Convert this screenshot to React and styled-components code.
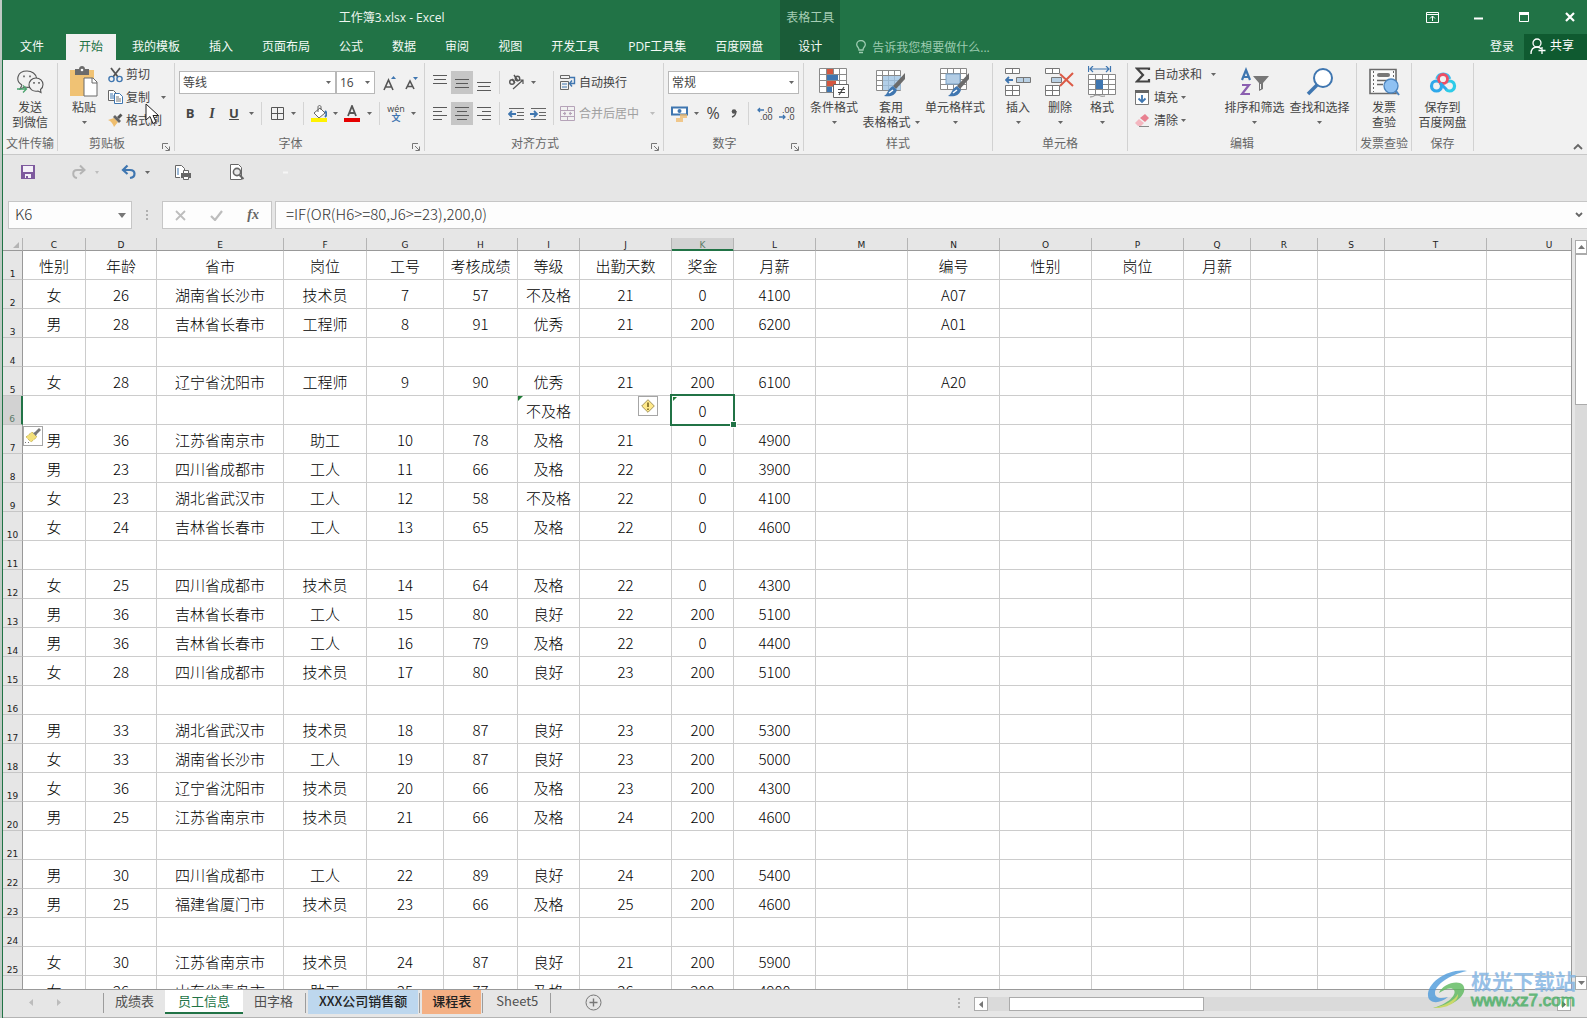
import React from "react";
import styled, { createGlobalStyle, css } from "styled-components";

const color = {
  green: "#217346",
  greenDark: "#1a5c38",
  ribbon: "#f1f1f1",
  chrome: "#e6e6e6",
  line: "#c8c8c8",
  text: "#444444",
  blue: "#3f76b0",
  grid: "#cccccc",
};

const Global = createGlobalStyle`
  *, *::before, *::after { box-sizing: border-box; }
  body { margin: 0; background: #bfcac4; }
  body, button, input, select {
    font-family: "Open Sans", "Noto Sans CJK SC", sans-serif;
    font-size: 12px;
    line-height: 15px;
    color: ${color.text};
  }
  button { border: 0; padding: 0; background: none; }
  svg { display: block; flex: none; }
`;

const Window = styled.div`
  display: flex;
  flex-direction: column;
  height: 100vh;
  overflow: hidden;
  background: ${color.chrome};
  margin-left: 2px;
  border-left: 1px solid ${color.green};
  position: relative;
`;

/* ---------- header ---------- */
const Header = styled.header`
  display: flex;
  height: 60px;
  flex: none;
  background: ${color.green};
`;
const HeaderPart = styled.div`
  display: flex;
  flex-direction: column;
  flex: ${(p) => (p.$grow ? "1" : "none")};
  background: ${(p) => (p.$dark ? color.greenDark : "transparent")};
`;
const TitleRow = styled.div`
  display: flex;
  height: 34px;
  align-items: center;
  justify-content: ${(p) => p.$align || "center"};
  color: ${(p) => p.$color || "#eef6f0"};
  gap: 16px;
  padding-right: ${(p) => p.$right || 0}px;
`;
const TabRow = styled.nav`
  display: flex;
  height: 26px;
  gap: 3px;
  padding-left: ${(p) => p.$left || 0}px;
`;
const Tab = styled.button`
  height: 26px;
  padding: 0 ${(p) => p.$pad || 13}px 2px;
  margin-right: ${(p) => p.$after || 0}px;
  color: ${(p) => (p.$active ? color.green : "#f4faf6")};
  background: ${(p) => (p.$active ? color.ribbon : "transparent")};
`;
const TellMe = styled.button`
  display: flex;
  align-items: center;
  gap: 6px;
  padding: 0;
  margin-right: auto;
  color: #9ccbb0;
`;
const Share = styled.button`
  display: flex;
  align-items: center;
  gap: 4px;
  width: 63px;
  padding: 0 0 3px 6px;
  background: #0f5a30;
  color: #ffffff;
`;
const WindowButton = styled.button`
  display: flex;
  width: 30px;
  height: 24px;
  align-items: center;
  justify-content: center;
`;

/* ---------- ribbon ---------- */
const Ribbon = styled.section`
  display: flex;
  height: 95px;
  flex: none;
  padding-top: 3px;
  background: ${color.ribbon};
  border-bottom: 1px solid ${color.line};
`;
const Group = styled.section`
  display: flex;
  flex-direction: column;
  flex: none;
  width: ${(p) => p.$w}px;
  height: 88px;
  border-right: 1px solid #d2d2d2;
`;
const GroupBody = styled.div`
  display: flex;
  height: 73px;
  padding-left: ${(p) => p.$left || 0}px;
`;
const GroupFoot = styled.footer`
  display: flex;
  height: 15px;
  color: #666666;
  text-align: center;
  white-space: nowrap;
`;
const FootLabel = styled.span`
  flex: 1;
`;
const Launcher = styled.button`
  display: flex;
  width: 18px;
  padding-left: 6px;
  align-self: flex-end;
`;
const Big = styled.button`
  display: flex;
  flex-direction: column;
  align-items: center;
  width: ${(p) => p.$w}px;
  padding-top: 3px;
  white-space: nowrap;
`;
const BigIcon = styled.span`
  display: flex;
  align-items: center;
  height: 32px;
  margin-bottom: 2px;
`;
const BigLine = styled.span`
  display: flex;
  align-items: center;
  justify-content: center;
  gap: 4px;
  height: 15px;
`;
const Stack = styled.div`
  display: flex;
  flex-direction: column;
  width: ${(p) => (p.$w ? p.$w + "px" : "auto")};
`;
const Small = styled.button`
  display: flex;
  align-items: center;
  gap: 3px;
  height: 23px;
  color: ${(p) => (p.$off ? "#a0a0a0" : color.text)};
  white-space: nowrap;
`;
const SmallArrow = styled.span`
  margin-left: ${(p) => p.$gap || 0}px;
`;
const Rows = styled.div`
  display: flex;
  flex-direction: column;
  gap: 8px;
  padding-top: 8px;
  padding-left: ${(p) => p.$left || 0}px;
`;
const Row = styled.div`
  display: flex;
  align-items: center;
  height: 23px;
`;
const Tool = styled.button`
  display: flex;
  align-items: center;
  justify-content: center;
  width: ${(p) => p.$w || 22}px;
  height: 23px;
  background: ${(p) => (p.$on ? "#c6c6c6" : "transparent")};
  font-size: ${(p) => p.$size || 13}px;
  font-weight: ${(p) => (p.$bold ? 700 : 400)};
  font-style: ${(p) => (p.$italic ? "italic" : "normal")};
  text-decoration: ${(p) => (p.$under ? "underline" : "none")};
  font-family: ${(p) => (p.$serif ? '"Liberation Serif", serif' : "inherit")};
`;
const Sep = styled.i`
  width: 1px;
  height: ${(p) => (p.$tall ? 54 : 23)}px;
  margin: ${(p) => (p.$tall ? "8px 4px 0" : "0 5px 0 4px")};
  background: #d4d4d4;
`;
const SelectWrap = styled.label`
  display: flex;
  align-items: center;
  position: relative;
  width: ${(p) => p.$w}px;
  margin-right: ${(p) => p.$after || 0}px;
`;
const Select = styled.select`
  appearance: none;
  width: 100%;
  height: 23px;
  padding: 0 0 1px 3px;
  border: 1px solid #b8b8b8;
  border-radius: 0;
  background: #ffffff;
`;
const SelectArrow = styled.span`
  position: absolute;
  right: 5px;
  pointer-events: none;
`;
const Collapse = styled.button`
  align-self: flex-end;
  margin: 0 4px 4px auto;
`;

/* ---------- quick access and formula bar ---------- */
const QuickBar = styled.div`
  display: flex;
  align-items: center;
  flex: none;
  height: 34px;
  margin-bottom: 12px;
  padding-left: 17px;
`;
const Quick = styled.button`
  width: 16px;
  margin-right: ${(p) => p.$after || 0}px;
`;
const FormulaBar = styled.div`
  display: flex;
  flex: none;
  height: 28px;
  padding-left: 5px;
`;
const field = css`
  border: 1px solid #c6c6c6;
  background: #fdfdfd;
`;
const NameBox = styled.div`
  ${field}
  display: flex;
  align-items: center;
  width: 124px;
  padding-right: 5px;
`;
const BareInput = styled.input`
  flex: 1;
  min-width: 0;
  border: 0;
  outline: 0;
  padding: 0 0 3px ${(p) => p.$left}px;
  background: transparent;
  font-family: "Noto Sans CJK SC", sans-serif;
  font-weight: 300;
  font-size: 15px;
  line-height: 20px;
  color: #333333;
`;
const Grip = styled.span`
  display: flex;
  align-items: center;
  justify-content: center;
  width: ${(p) => p.$w}px;
`;
const FormulaTools = styled.div`
  ${field}
  display: flex;
  align-items: center;
  justify-content: space-around;
  width: 110px;
  margin-right: 3px;
`;
const FormulaField = styled.div`
  ${field}
  display: flex;
  align-items: center;
  flex: 1;
  border-right: 0;
  padding-right: 4px;
`;

/* ---------- sheet ---------- */
const Body = styled.main`
  display: flex;
  flex: 1;
  min-height: 0;
  padding-top: 9px;
`;
const SheetArea = styled.div`
  flex: 1;
  min-width: 0;
  overflow: hidden;
  border-right: 1px solid #999999;
  border-bottom: 1px solid #999999;
`;
const Sheet = styled.table`
  width: 1609px;
  table-layout: fixed;
  border-collapse: separate;
  border-spacing: 0;
  background: #ffffff;
  font-family: "Noto Sans CJK SC", sans-serif;
`;
const ColHead = styled.th`
  height: 13px;
  padding: 2px 0 0;
  border-right: 1px solid #b4b4b4;
  border-bottom: 1px solid ${(p) => (p.$on ? color.green : "#999999")};
  box-shadow: ${(p) => (p.$on ? `inset 0 -1px ${color.green}` : "none")};
  background: ${(p) => (p.$on ? "#d2d2d2" : color.chrome)};
  color: ${(p) => (p.$on ? "#5c7a68" : "#222222")};
  font: 400 9px/10px "DejaVu Sans", sans-serif;
`;
const CornerMark = styled.svg`
  margin-left: auto;
  margin-right: 3px;
`;
const RowHead = styled.th`
  height: 29px;
  padding: 0;
  vertical-align: bottom;
  border-right: ${(p) => (p.$on ? `2px solid ${color.green}` : "1px solid #999999")};
  border-bottom: 1px solid #c6c6c6;
  background: ${(p) => (p.$on ? "#d2d2d2" : color.chrome)};
  color: ${(p) => (p.$on ? "#5c7a68" : "#222222")};
  font: 400 9px/10px "DejaVu Sans", sans-serif;
`;
const Cell = styled.td`
  position: relative;
  height: 29px;
  padding: 2px 0 0;
  border-right: 1px solid ${color.grid};
  border-bottom: 1px solid ${color.grid};
  text-align: center;
  white-space: nowrap;
  font-size: 15px;
  font-weight: 300;
  line-height: 24px;
  color: #000000;
`;
const Selection = styled.i`
  position: absolute;
  inset: -2px;
  z-index: 1;
  border: 2px solid ${color.green};
  &::after {
    content: "";
    position: absolute;
    right: -4px;
    bottom: -4px;
    width: 7px;
    height: 7px;
    background: ${color.green};
    border: 1px solid #ffffff;
  }
`;
const Flag = styled.i`
  position: absolute;
  top: ${(p) => p.$inset || 0}px;
  left: ${(p) => p.$inset || 0}px;
  border-top: ${(p) => p.$s}px solid #1e7b34;
  border-right: ${(p) => p.$s}px solid transparent;
`;
const Smart = styled.button`
  position: absolute;
  top: ${(p) => (p.$side === "left" ? 1 : 0)}px;
  ${(p) => (p.$side === "left" ? "left: 0;" : "right: 13px;")}
  display: flex;
  align-items: center;
  justify-content: center;
  width: 20px;
  height: 20px;
  border: 1px solid #a6a6a6;
  background: #ffffff;
`;
const VScroll = styled.div`
  display: flex;
  flex-direction: column;
  flex: none;
  width: 12px;
  margin-left: 3px;
  padding-top: 2px;
`;
const VTrack = styled.div`
  flex: 1;
  background: #dadada;
`;
const VThumb = styled.div`
  height: 151px;
  background: #ffffff;
  border: 1px solid #ababab;
  border-right: 0;
`;
const ScrollButton = styled.button`
  display: flex;
  flex: none;
  align-items: center;
  justify-content: center;
  width: ${(p) => p.$w || 14}px;
  height: 14px;
  border: 1px solid #ababab;
  background: #ffffff;
`;

/* ---------- sheet tabs ---------- */
const Footer = styled.footer`
  display: flex;
  flex: none;
  height: 28px;
  padding-right: 16px;
  border-bottom: 1px solid #b4b4b4;
`;
const NavArrows = styled.div`
  display: flex;
  align-items: flex-start;
  gap: 22px;
  width: 100px;
  padding: 9px 0 0 26px;
`;
const SheetTab = styled.button`
  height: 24px;
  padding: 0 ${(p) => p.$pad || 11}px 2px;
  font-family: "Noto Sans CJK SC", sans-serif;
  font-size: 13px;
  white-space: nowrap;
  background: ${(p) => p.$bg || "transparent"};
  color: ${(p) => p.$fg || "#505050"};
  font-weight: ${(p) => (p.$strong ? 500 : 400)};
  border-bottom: 2px solid ${(p) => (p.$active ? color.green : "transparent")};
`;
const TabSep = styled.i`
  width: 1px;
  height: 20px;
  margin: 3px ${(p) => (p.$first ? 0 : 2)}px 0 ${(p) => (p.$first ? 0 : 1)}px;
  background: #9c9c9c;
`;
const AddSheet = styled.button`
  margin: 0 auto 2px 32px;
`;
const HScroll = styled.div`
  display: flex;
  width: 597px;
  height: 14px;
  margin-top: 7px;
  background: #dadada;
`;
const HThumb = styled.div`
  width: 195px;
  margin-left: 21px;
  margin-right: auto;
  border: 1px solid #ababab;
  background: #ffffff;
`;

/* ---------- overlays ---------- */
const Pointer = styled.svg`
  position: absolute;
  left: 142px;
  top: 103px;
  pointer-events: none;
`;
const Watermark = styled.div`
  position: absolute;
  right: 11px;
  bottom: 8px;
  display: flex;
  align-items: center;
  gap: 2px;
  opacity: 0.8;
  pointer-events: none;
`;
const MarkName = styled.div`
  font: 700 21px/24px "Noto Sans CJK SC", sans-serif;
  color: #7fb2e2;
  white-space: nowrap;
`;
const MarkUrl = styled.div`
  font: 400 17px/18px "Liberation Sans", sans-serif;
  color: #46ad62;
  -webkit-text-stroke: 1px #46ad62;
`;

/* ---------- icons ---------- */
const Icon = ({ w = 16, h = w, children, ...rest }) => (
  <svg width={w} height={h} viewBox={`0 0 ${w} ${h}`} fill="none" aria-hidden="true" {...rest}>
    {children}
  </svg>
);
const Arrow = ({ fill = "#666666", s = 5 }) => (
  <Icon w={s} h={3}><path d={`M0 0h${s}L${s / 2} 3z`} fill={fill} /></Icon>
);
const ArrowTool = ({ w = 12, label, fill }) => (
  <Tool $w={w} aria-label={label}><Arrow fill={fill} /></Tool>
);
const Lines = ({ rows, top = 0 }) => (
  <Icon w={14} h={16}>
    {rows.map(([x, w], i) => (
      <path key={i} d={`M${x} ${top + i * 4 + 0.5}h${w}`} stroke="#5a5a5a" />
    ))}
  </Icon>
);
const WeChat = () => (
  <Icon w={28} h={26}>
    <path d="M6 16l-2 4 5-2c2 .5 4 .5 5 0M6 16C-1 12 1 2 11 2c5 0 9 3 9.500 7" stroke="#555" strokeWidth="1.1" />
    <path d="M13 16c0-4 3-7 7-7s7 3 7 6.500c0 2-1 4-2.500 5l.5 3-3-1.500c-5 1-9-2-9-6z" stroke="#555" strokeWidth="1.1" />
    <path d="M8 6.500v1.800M14 6.500v1.800M18 13v1.800M23 13v1.800" stroke="#555" strokeWidth="1.500" />
    <path d="M1 20h9M7 16.500l3.500 3.500L7 23.500" stroke="#4aa36d" strokeWidth="1.300" />
  </Icon>
);
const Paste = () => (
  <Icon w={30} h={32}>
    <path d="M1 4h24v26H1z" fill="#f0c274" />
    <path d="M6 3h4c0-4 6-4 6 0h4v6H6z" fill="#6b6b6b" /><circle cx="13" cy="4" r="1.3" fill="#fff" />
    <path d="M15 12h9l4 4v14H15z" fill="#fff" stroke="#6b6b6b" /><path d="M23 12v5h5" stroke="#6b6b6b" />
  </Icon>
);
const Scissors = () => (
  <Icon w={15} h={16}>
    <path d="M3 1l7 9M12 1L5 10" stroke="#555" strokeWidth="1.8" />
    <circle cx="3.5" cy="12" r="2.6" stroke={color.blue} strokeWidth="1.4" />
    <circle cx="11.5" cy="12" r="2.6" stroke={color.blue} strokeWidth="1.4" />
  </Icon>
);
const Copy = () => (
  <Icon w={15} h={15}>
    <path d="M.5.5h5l3 3v7h-8z" fill="#fff" stroke="#666" /><path d="M2 4h3M2 6h4M2 8h4" stroke={color.blue} />
    <path d="M6.500 3.500h5l3 3v7h-8z" fill="#fff" stroke={color.blue} /><path d="M8 7h3M8 9h5M8 11h5" stroke="#777" />
  </Icon>
);
const Brush = () => (
  <Icon w={15} h={15}>
    <path d="M0 7l6-2 4 4-4 5c-1-3-3-6-6-7z" fill="#efbe6e" />
    <path d="M5 4l2-2 6 6-2 2z" fill="#666" /><path d="M9 4l3.500-3.500 2 2L11 6z" fill="#555" />
  </Icon>
);
const GrowFont = ({ up }) => (
  <Icon w={14} h={16}>
    <path d={up ? "M1 15L5.500 5l4.500 10M3 12h5" : "M1 14l4-8 4 8M2.500 11.500h5"} stroke="#555" strokeWidth="1.600" />
    <path d={up ? "M8 4l2.500-3L13 4z" : "M8 2h5l-2.500 3z"} fill={color.blue} />
  </Icon>
);
const Borders = () => (
  <Icon w={13}><path d="M.5.5h12v12H.5zM6.500.5v12M.5 6.500h12" stroke="#555" /></Icon>
);
const Fill = () => (
  <Icon w={16} h={17}>
    <path d="M3 8l6-5 5 5-6 5z" fill="#fff" stroke="#666" /><path d="M7 7V2c0-2 3-2 3 0v3" stroke="#666" />
    <path d="M14 6c3 3 1 5 0 6" stroke={color.blue} strokeWidth="2" /><path d="M0 13h16v4H0z" fill="#fff200" />
  </Icon>
);
const FontColor = () => (
  <Icon w={16} h={17}>
    <path d="M4 11L8 1l4 10M5.500 8h5" stroke="#555" strokeWidth="1.8" /><path d="M0 13h16v4H0z" fill="#e60000" />
  </Icon>
);
const Orientation = () => (
  <Icon w={17}>
    <circle cx="4" cy="8" r="2.300" stroke="#555" strokeWidth="1.400" /><path d="M4 5l3 4M6 1l4 6" stroke="#555" strokeWidth="1.400" />
    <circle cx="9.500" cy="4.500" r="2.200" stroke="#555" strokeWidth="1.400" />
    <path d="M5 15l10-9M11 6h4v4" stroke="#555" strokeWidth="1.200" />
  </Icon>
);
const Indent = ({ right }) => (
  <Icon w={16} h={14}>
    <path d="M1 1.500h15M9 5.500h7M9 8.500h7M1 12.500h15" stroke="#666" />
    <path d={right ? "M0 7h6M4 4l3 3-3 3" : "M8 7H2M4 4L1 7l3 3"} stroke={color.blue} strokeWidth="1.800" />
  </Icon>
);
const Wrap = () => (
  <Icon>
    <path d="M.5.500h9v3h-9zM.5 6.500h8v8h-8z" stroke="#666" /><path d="M2 9h5M2 12h5" stroke={color.blue} />
    <path d="M10 2.500h4.500v6H10M12 5.500l-2.500 3 2.500 3" stroke={color.blue} strokeWidth="1.400" />
  </Icon>
);
const Merge = () => (
  <Icon>
    <path d="M.5.500h14v14H.5zM.5 4.500h14M.5 10.500h14M7.500.5v4M7.500 10.500v4" stroke="#b5a3b8" />
    <path d="M3 7.500h3M9 7.500h3M4 6l2 1.500L4 9M11 6L9 7.500 11 9" stroke="#b5a3b8" />
  </Icon>
);
const Currency = () => (
  <Icon w={17} h={16}>
    <path d="M1 1.500h15v7H1z" fill="#fff" stroke={color.blue} strokeWidth="2" /><circle cx="8.500" cy="5" r="2" fill={color.blue} />
    <path d="M9 9h7M9 11h7M5 13h7M5 15h7" stroke="#efb96a" strokeWidth="1.500" />
  </Icon>
);
const DecimalText = styled.text`
  font: 400 9px "Liberation Sans", sans-serif;
  fill: #444444;
`;
const Decimal = ({ more }) => (
  <Icon w={18} h={19}>
    <DecimalText x={more ? 9 : 4} y="9">{more ? ".0" : ".00"}</DecimalText>
    <DecimalText x={more ? 4 : 9} y="16">{more ? ".00" : ".0"}</DecimalText>
    <path d={more ? "M8 6H2M4 4L2 6l2 2" : "M1 13h6M5 11l2 2-2 2"} stroke={color.blue} strokeWidth="1.300" />
  </Icon>
);
const gridPath = (x, y, w, h, n, m) => {
  let d = `M${x} ${y}h${w}v${h}h${-w}z`;
  for (let i = 1; i < n; i++) d += `M${x + Math.round((w * i) / n)} ${y}v${h}`;
  for (let i = 1; i < m; i++) d += `M${x} ${y + Math.round((h * i) / m)}h${w}`;
  return d;
};
const CondFormat = () => (
  <Icon w={30} h={32}>
    <path d={gridPath(0.5, 2.5, 27, 24, 4, 4)} fill="#fff" stroke="#8a8a8a" />
    <path d="M8 3h6v5H8zM8 15h9v5H8z" fill="#d4573f" /><path d="M8 9h11v5H8zM8 21h5v5H8z" fill="#3f76b0" />
    <path d="M14.500 18.500h15v13h-15z" fill="#fff" stroke="#666" /><path d="M19 23.500h7M19 26.500h7M25 21l-5 8" stroke="#444" strokeWidth="1.200" />
  </Icon>
);
const PaintBrush = () => (
  <>
    <path d="M29 7v6l-9 10-3-3z" fill="#6b6b6b" />
    <path d="M17 20l4 4c-2 6-7 7-13 6 4-2 4-8 9-10z" fill={color.blue} /><path d="M13 27l4-3" stroke="#fff" strokeWidth="1.500" />
  </>
);
const TableFormat = () => (
  <Icon w={30} h={32}>
    <path d={gridPath(0.5, 4.5, 24, 20, 4, 4)} fill="#fff" stroke="#8a8a8a" />
    <path d="M7 10h18v14H7z" fill="#9fc3e3" fillOpacity=".8" /><PaintBrush />
  </Icon>
);
const CellStyles = () => (
  <Icon w={30} h={32}>
    <path d={gridPath(0.5, 2.5, 26, 21, 4, 4)} fill="#fff" stroke="#8a8a8a" />
    <path d="M6 8h14v10H6z" fill="#b3cde5" stroke="#7aa3c9" /><PaintBrush />
  </Icon>
);
const InsertCells = () => (
  <Icon w={27} h={30}>
    <path d={gridPath(0.5, 1.5, 14, 5, 2, 1) + gridPath(0.5, 18.5, 14, 10, 2, 2)} fill="#fff" stroke="#777" />
    <path d={gridPath(11.5, 10.5, 14, 5, 2, 1)} fill="#b9d0e4" stroke="#777" />
    <path d="M8 13H2M4 10l-3 3 3 3" stroke={color.blue} strokeWidth="1.800" />
  </Icon>
);
const DeleteCells = () => (
  <Icon w={30} h={30}>
    <path d={gridPath(0.5, 1.5, 14, 5, 2, 1) + gridPath(0.5, 18.5, 14, 10, 2, 2)} fill="#fff" stroke="#777" />
    <path d="M6.500 10.500h10v5h-10z" fill="#b9d0e4" stroke="#777" />
    <path d="M15 7l13 12M28 6L15 19" stroke="#dc5a46" strokeWidth="2" />
  </Icon>
);
const FormatCells = () => (
  <Icon w={28} h={32}>
    <path d="M.5 0v6M22.500 0v6M2 3h19M5 0L2 3l3 3M18 0l3 3-3 3" stroke={color.blue} strokeWidth="1.200" />
    <path d={gridPath(0.5, 8.5, 27, 20, 4, 4)} fill="#fff" stroke="#888" /><path d="M8 14h7v9H8z" fill={color.blue} />
    <path d="M2 31c4 0 4-2 7-2s3 2 8 1" stroke="#888" />
  </Icon>
);
const Sigma = () => (
  <Icon><path d="M14 3V1.500H2L8 8l-6 6.500h12V12" stroke="#444" strokeWidth="2.200" /></Icon>
);
const FillDown = () => (
  <Icon>
    <path d="M.5 1.500h13v13H.5z" fill="#fff" stroke="#777" /><path d="M0 0h14v3H0z" fill="#666" />
    <path d="M7 5v7M3.500 8.500L7 12l3.500-3.500" stroke={color.blue} strokeWidth="1.800" />
  </Icon>
);
const Eraser = () => (
  <Icon w={16} h={14}>
    <path d="M5 4l5-4 4 4-4 4z" fill="#e88090" /><path d="M4 5l5 4-3 3H3L0 9z" fill="#f3b6bf" /><path d="M4 12.500h10" stroke="#888" />
  </Icon>
);
const SortFilter = () => (
  <Icon w={30} h={30}>
    <path d="M2 13L6 3l4 10M3.500 10h5" stroke={color.blue} strokeWidth="2.200" />
    <path d="M2 18h7L2 27h8" stroke="#8b5fb0" strokeWidth="2.200" />
    <path d="M13 9h16l-6 7v6l-4 2v-8z" fill="#777" /><path d="M20.500 17v5" stroke="#f1f1f1" />
  </Icon>
);
const Find = () => (
  <Icon w={28} h={30}>
    <circle cx="17" cy="11" r="9" fill="#fff" stroke={color.blue} strokeWidth="2" />
    <path d="M11 18l-9 9" stroke={color.blue} strokeWidth="3.500" />
  </Icon>
);
const Invoice = () => (
  <Icon w={31} h={28}>
    <path d="M1 1.500h26v24H1z" fill="#fafafa" stroke="#6b6b6b" strokeWidth="1.600" />
    <path d="M4.500 3v21M24.500 3v12" stroke="#666" strokeDasharray="2 2" />
    <rect x="8" y="5" width="13" height="4" rx="2" fill="#777" /><path d="M8 12.500h10M8 16.500h6" stroke="#666" strokeWidth="1.600" />
    <circle cx="22" cy="18" r="7" fill="#8fc1f2" stroke="#4a83bd" strokeWidth="1.300" /><path d="M27 23l3 4" stroke="#4a83bd" strokeWidth="2" />
  </Icon>
);
const Cloud = () => (
  <Icon w={28} h={24}>
    <path d="M8 9a6.500 6.500 0 0 1 12.500 0" stroke="#38bdf0" strokeWidth="3.600" />
    <circle cx="7.500" cy="16" r="5" stroke="#2ea8ea" strokeWidth="3.200" />
    <path d="M17 19.500a5 5 0 1 0 0-7" stroke="#2ecbe8" strokeWidth="3.200" />
    <circle cx="14" cy="9" r="4.500" fill="#f1f1f1" stroke="#ee4e64" strokeWidth="2.800" /><path d="M11 13l6.500 6.500" stroke="#2ea8ea" strokeWidth="3" />
  </Icon>
);
const LaunchIcon = () => (
  <Icon w={8}><path d="M.5 6V.5H6M3 3l4 4M7.500 3.500v4h-4" stroke="#777" /></Icon>
);
const BrushTip = () => (
  <Icon>
    <path d="M1 9l6-5 5 5-6 5z" fill="#f3e07a" stroke="#b9a43c" strokeDasharray="1 1" /><path d="M8 5l2-1 4-4 2 2-4 4-1 2z" fill="#777" />
    <path d="M0 14.500h6" stroke="#777" strokeDasharray="1 2" />
  </Icon>
);
const Warn = () => (
  <Icon w={14}><path d="M7 .7L13.300 7 7 13.300.7 7z" fill="#ffe98a" stroke="#a3935a" /><path d="M7 3.500v4.500M7 9.500V11" stroke="#7a6420" strokeWidth="1.600" /></Icon>
);
const Dots = () => (
  <Icon w={3} h={11}><path d="M0 0h2v2H0zM0 4h2v2H0zM0 8h2v2H0z" fill="#b0b0b0" /></Icon>
);
const FxText = styled.span`
  font: italic 700 14px/20px "Liberation Serif", serif;
  color: #666666;
`;
const WenTop = styled.span`
  display: flex;
  flex-direction: column;
  align-items: center;
  font-size: 9px;
  line-height: 8px;
  b { color: ${color.blue}; line-height: 10px; }
`;

/* ---------- data ---------- */
const tabsBefore = ["文件", "开始", "我的模板", "插入", "页面布局", "公式", "数据", "审阅", "视图", "开发工具", "PDF工具集", "百度网盘"];
const columns = [
  ["C", 63], ["D", 71], ["E", 127], ["F", 83], ["G", 77], ["H", 74], ["I", 62], ["J", 92], ["K", 62], ["L", 82],
  ["M", 92], ["N", 92], ["O", 92], ["P", 92], ["Q", 67], ["R", 67], ["S", 67], ["T", 102], ["U", 125],
];
const rows = [
  "性别,年龄,省市,岗位,工号,考核成绩,等级,出勤天数,奖金,月薪,,编号,性别,岗位,月薪",
  "女,26,湖南省长沙市,技术员,7,57,不及格,21,0,4100,,A07",
  "男,28,吉林省长春市,工程师,8,91,优秀,21,200,6200,,A01",
  "",
  "女,28,辽宁省沈阳市,工程师,9,90,优秀,21,200,6100,,A20",
  ",,,,,,不及格,,0",
  "男,36,江苏省南京市,助工,10,78,及格,21,0,4900",
  "男,23,四川省成都市,工人,11,66,及格,22,0,3900",
  "女,23,湖北省武汉市,工人,12,58,不及格,22,0,4100",
  "女,24,吉林省长春市,工人,13,65,及格,22,0,4600",
  "",
  "女,25,四川省成都市,技术员,14,64,及格,22,0,4300",
  "男,36,吉林省长春市,工人,15,80,良好,22,200,5100",
  "男,36,吉林省长春市,工人,16,79,及格,22,0,4400",
  "女,28,四川省成都市,技术员,17,80,良好,23,200,5100",
  "",
  "男,33,湖北省武汉市,技术员,18,87,良好,23,200,5300",
  "女,33,湖南省长沙市,工人,19,87,良好,23,200,5000",
  "女,36,辽宁省沈阳市,技术员,20,66,及格,23,200,4300",
  "男,25,江苏省南京市,技术员,21,66,及格,24,200,4600",
  "",
  "男,30,四川省成都市,工人,22,89,良好,24,200,5400",
  "男,25,福建省厦门市,技术员,23,66,及格,25,200,4600",
  "",
  "女,30,江苏省南京市,技术员,24,87,良好,21,200,5900",
  "女,26,山东省青岛市,助工,25,77,及格,26,200,4900",
].map((r) => r.split(","));

const cellExtras = {
  I6: <Flag $s={5} />,
  J6: <Smart aria-label="错误检查选项"><Warn /></Smart>,
  K6: <><Flag $s={4} $inset={1} /><Selection /></>,
  C7: <Smart $side="left" aria-label="粘贴选项"><BrushTip /></Smart>,
};

/* ---------- composed parts ---------- */
const RibbonGroup = ({ w, left, label, launcher, children }) => (
  <Group $w={w} aria-label={label}>
    <GroupBody $left={left}>{children}</GroupBody>
    <GroupFoot>
      <FootLabel>{label}</FootLabel>
      {launcher && <Launcher aria-label={`${label}设置`}><LaunchIcon /></Launcher>}
    </GroupFoot>
  </Group>
);
const BigButton = ({ w, icon, label, second, arrow }) => (
  <Big $w={w}>
    <BigIcon>{icon}</BigIcon>
    <BigLine>{label}</BigLine>
    <BigLine>{second}{arrow && <Arrow />}</BigLine>
  </Big>
);
const SmallButton = ({ icon, label, arrowGap, off }) => (
  <Small $off={off}>
    {icon}
    <span>{label}</span>
    {arrowGap !== undefined && <SmallArrow $gap={arrowGap}><Arrow fill={off ? "#bdbdbd" : undefined} /></SmallArrow>}
  </Small>
);
const Dropdown = ({ w, label, value, after }) => (
  <SelectWrap $w={w} $after={after}>
    <Select aria-label={label} defaultValue={value}><option>{value}</option></Select>
    <SelectArrow><Arrow /></SelectArrow>
  </SelectWrap>
);

function TopHeader() {
  return (
    <Header>
      <HeaderPart>
        <TitleRow>工作簿3.xlsx - Excel</TitleRow>
        <TabRow $left={4}>
          {tabsBefore.map((t, i) => (
            <Tab key={t} $active={i === 1} $after={i === 0 ? 6 : i === tabsBefore.length - 1 ? 4 : 0}>{t}</Tab>
          ))}
        </TabRow>
      </HeaderPart>
      <HeaderPart $dark>
        <TitleRow $color="#a5cdb5">表格工具</TitleRow>
        <TabRow><Tab $pad={18}>设计</Tab></TabRow>
      </HeaderPart>
      <HeaderPart $grow>
        <TitleRow $align="flex-end" $right={2}>
          <WindowButton aria-label="功能区显示选项">
            <Icon w={13} h={11}><path d="M.5.500h12v10H.5zM.5 2.500h12M6.500 9V4M4 6.500L6.500 4 9 6.500" stroke="#fff" /></Icon>
          </WindowButton>
          <WindowButton aria-label="最小化"><Icon w={9} h={5}><path d="M0 3.500h9" stroke="#fff" strokeWidth="2" /></Icon></WindowButton>
          <WindowButton aria-label="最大化"><Icon w={10}><path d="M.5.500h9v9h-9z" stroke="#fff" /><path d="M0 1.500h10" stroke="#fff" strokeWidth="3" /></Icon></WindowButton>
          <WindowButton aria-label="关闭"><Icon w={10}><path d="M1 1l8 8M9 1L1 9" stroke="#fff" strokeWidth="2.200" /></Icon></WindowButton>
        </TitleRow>
        <TabRow $left={16}>
          <TellMe>
            <Icon w={10} h={14}><path d="M3 10C3 7 .7 7 .7 4.500a4.300 4 0 0 1 8.600 0C9.300 7 7 7 7 10zM3 12.500h4" stroke="#9ccbb0" strokeWidth="1.300" /></Icon>
            告诉我您想要做什么...
          </TellMe>
          <Tab $pad={7}>登录</Tab>
          <Share>
            <Icon><circle cx="7" cy="5" r="4" stroke="#fff" strokeWidth="1.300" /><path d="M1 16c0-4 2-7 6-7 2 0 3 0 4 2M12 9v7M8.500 12.500h7" stroke="#fff" strokeWidth="1.300" /></Icon>
            共享
          </Share>
        </TabRow>
      </HeaderPart>
    </Header>
  );
}

function RibbonBar() {
  const left = [[0, 14], [0, 9], [0, 14], [0, 9]];
  const center = [[0, 14], [2, 10], [0, 14], [2, 10]];
  const right = [[0, 14], [5, 9], [0, 14], [5, 9]];
  const three = [[0, 14], [1, 12], [0, 14]];
  return (
    <Ribbon>
      <RibbonGroup w={55} label="文件传输">
        <BigButton w={54} icon={<WeChat />} label="发送" second="到微信" />
      </RibbonGroup>
      <RibbonGroup w={117} left={2} label="剪贴板" launcher>
        <BigButton w={48} icon={<Paste />} label="粘贴" arrow />
        <Stack>
          <SmallButton icon={<Scissors />} label="剪切" />
          <SmallButton icon={<Copy />} label="复制" arrowGap={8} />
          <SmallButton icon={<Brush />} label="格式刷" />
        </Stack>
      </RibbonGroup>
      <RibbonGroup w={250} left={4} label="字体" launcher>
        <Rows>
          <Row>
            <Dropdown w={157} label="字体" value="等线" />
            <Dropdown w={39} label="字号" value="16" after={4} />
            <Tool aria-label="增大字号"><GrowFont up /></Tool>
            <Tool aria-label="减小字号"><GrowFont /></Tool>
          </Row>
          <Row>
            <Tool $bold>B</Tool>
            <Tool $bold $italic $serif $size={14}>I</Tool>
            <Tool $bold $under>U</Tool>
            <ArrowTool label="下划线选项" />
            <Sep />
            <Tool $w={20} aria-label="边框"><Borders /></Tool>
            <ArrowTool label="边框选项" />
            <Sep />
            <Tool $w={20} aria-label="填充颜色"><Fill /></Tool>
            <ArrowTool label="填充颜色选项" />
            <Tool aria-label="字体颜色"><FontColor /></Tool>
            <ArrowTool label="字体颜色选项" />
            <Sep />
            <Tool><WenTop>wén<b>文</b></WenTop></Tool>
            <ArrowTool label="拼音选项" />
          </Row>
        </Rows>
      </RibbonGroup>
      <RibbonGroup w={239} left={4} label="对齐方式" launcher>
        <Rows>
          <Row>
            <Tool aria-label="顶端对齐"><Lines rows={three} /></Tool>
            <Tool $on aria-label="垂直居中"><Lines rows={three} top={4} /></Tool>
            <Tool aria-label="底端对齐"><Lines rows={three} top={7} /></Tool>
            <Sep />
            <Tool aria-label="方向"><Orientation /></Tool>
            <ArrowTool label="方向选项" />
          </Row>
          <Row>
            <Tool aria-label="左对齐"><Lines rows={left} top={1} /></Tool>
            <Tool $on aria-label="居中"><Lines rows={center} top={1} /></Tool>
            <Tool aria-label="右对齐"><Lines rows={right} top={1} /></Tool>
            <Sep />
            <Tool aria-label="减少缩进量"><Indent /></Tool>
            <Tool aria-label="增加缩进量"><Indent right /></Tool>
          </Row>
        </Rows>
        <Sep $tall />
        <Rows $left={2}>
          <SmallButton icon={<Wrap />} label="自动换行" />
          <SmallButton icon={<Merge />} label="合并后居中" arrowGap={8} off />
        </Rows>
      </RibbonGroup>
      <RibbonGroup w={140} left={4} label="数字" launcher>
        <Rows>
          <Dropdown w={131} label="数字格式" value="常规" />
          <Row>
            <Tool aria-label="会计数字格式"><Currency /></Tool>
            <ArrowTool label="会计数字格式选项" />
            <Tool $size={16}>%</Tool>
            <Tool $w={20} aria-label="千位分隔样式">
              <Icon w={6} h={9}><circle cx="3" cy="2.500" r="2.300" fill="#555" /><path d="M5 2c0 3-1 5-4 6" stroke="#555" strokeWidth="1.400" /></Icon>
            </Tool>
            <Sep />
            <Tool aria-label="增加小数位数"><Decimal more /></Tool>
            <Tool aria-label="减少小数位数"><Decimal /></Tool>
          </Row>
        </Rows>
      </RibbonGroup>
      <RibbonGroup w={189} left={4} label="样式">
        <BigButton w={52} icon={<CondFormat />} label="条件格式" arrow />
        <BigButton w={62} icon={<TableFormat />} label="套用" second="表格格式" arrow />
        <BigButton w={66} icon={<CellStyles />} label="单元格样式" arrow />
      </RibbonGroup>
      <RibbonGroup w={135} left={4} label="单元格">
        <BigButton w={42} icon={<InsertCells />} label="插入" arrow />
        <BigButton w={42} icon={<DeleteCells />} label="删除" arrow />
        <BigButton w={42} icon={<FormatCells />} label="格式" arrow />
      </RibbonGroup>
      <RibbonGroup w={229} left={7} label="编辑">
        <Stack $w={87}>
          <SmallButton icon={<Sigma />} label="自动求和" arrowGap={6} />
          <SmallButton icon={<FillDown />} label="填充" arrowGap={0} />
          <SmallButton icon={<Eraser />} label="清除" arrowGap={0} />
        </Stack>
        <BigButton w={65} icon={<SortFilter />} label="排序和筛选" arrow />
        <BigButton w={65} icon={<Find />} label="查找和选择" arrow />
      </RibbonGroup>
      <RibbonGroup w={55} label="发票查验">
        <BigButton w={54} icon={<Invoice />} label="发票" second="查验" />
      </RibbonGroup>
      <RibbonGroup w={62} label="保存">
        <BigButton w={61} icon={<Cloud />} label="保存到" second="百度网盘" />
      </RibbonGroup>
      <Collapse aria-label="折叠功能区"><Icon w={10} h={7}><path d="M1 6l4-4 4 4" stroke="#666" strokeWidth="1.800" /></Icon></Collapse>
    </Ribbon>
  );
}

export default function App() {
  return (
    <Window>
      <Global />
      <TopHeader />
      <RibbonBar />
      <QuickBar>
        <Quick aria-label="保存" $after={35}>
          <Icon><path d="M1 1h14v14H1z" fill="#7e5a9e" /><path d="M3 2h10v6H3zM5 10h6v4H5z" fill="#f4f0f8" /><path d="M6 12h2v3H6z" fill="#7e5a9e" /></Icon>
        </Quick>
        <Quick aria-label="恢复" $after={8}>
          <Icon><path d="M13 6H6c-5 0-5 7 0 8M9 1.500L13.500 6 9 10" stroke="#b4b4b4" strokeWidth="2" /></Icon>
        </Quick>
        <Quick aria-label="恢复选项" $after={10}><Arrow s={4} fill="#bdbdbd" /></Quick>
        <Quick aria-label="撤消" $after={8}>
          <Icon><path d="M2 6h7c6 0 6 7 0 8M6.500 1.500L2 6l4.500 4" stroke={color.blue} strokeWidth="2.200" /></Icon>
        </Quick>
        <Quick aria-label="撤消选项" $after={14}><Arrow /></Quick>
        <Quick aria-label="快速打印" $after={38}>
          <Icon><path d="M5 13.500H.5v-12h6l3 3V7" fill="#fff" stroke="#666" /><path d="M3 4v7" stroke={color.blue} /><path d="M6 9h10v5H6z" fill="#666" /><path d="M8.500 6.500h5v3h-5zM8.500 12.500h5v3h-5z" fill="#fff" stroke="#666" /></Icon>
        </Quick>
        <Quick aria-label="打印预览" $after={38}>
          <Icon><path d="M1.500.500h8l3 3v12h-11z" fill="#fff" stroke="#666" /><circle cx="8" cy="8" r="3.600" fill="#e8e8e8" stroke="#666" strokeWidth="1.600" /><path d="M10.500 11l4 4" stroke="#666" strokeWidth="2" /></Icon>
        </Quick>
        <Quick aria-label="自定义快速访问工具栏"><Icon w={5} h={3}><path d="M0 1.500h5" stroke="#f6f6f6" strokeWidth="2" /></Icon></Quick>
      </QuickBar>
      <FormulaBar>
        <NameBox>
          <BareInput $left={6} aria-label="名称框" defaultValue="K6" />
          <Icon w={8} h={5}><path d="M0 0h8L4 5z" fill="#777" /></Icon>
        </NameBox>
        <Grip $w={30}><Dots /></Grip>
        <FormulaTools>
          <button aria-label="取消"><Icon w={11}><path d="M1 1l9 9M10 1l-9 9" stroke="#bdbdbd" strokeWidth="1.800" /></Icon></button>
          <button aria-label="输入"><Icon w={13} h={11}><path d="M1 6l4 4 7-9" stroke="#bdbdbd" strokeWidth="2.200" /></Icon></button>
          <button aria-label="插入函数"><FxText>fx</FxText></button>
        </FormulaTools>
        <FormulaField>
          <BareInput $left={10} aria-label="编辑栏" defaultValue="=IF(OR(H6>=80,J6>=23),200,0)" />
          <Icon w={8} h={6}><path d="M1 1l3 3 3-3" stroke="#666" strokeWidth="1.800" /></Icon>
        </FormulaField>
      </FormulaBar>
      <Body>
        <SheetArea>
          <Sheet>
            <colgroup>
              <col width="20" />
              {columns.map(([n, w]) => <col key={n} width={w} />)}
            </colgroup>
            <thead>
              <tr>
                <ColHead><CornerMark width="6" height="6"><path d="M6 0v6H0z" fill="#b4b4b4" /></CornerMark></ColHead>
                {columns.map(([n]) => <ColHead key={n} $on={n === "K"} scope="col">{n}</ColHead>)}
              </tr>
            </thead>
            <tbody>
              {rows.map((r, i) => (
                <tr key={i}>
                  <RowHead scope="row" $on={i === 5}>{i + 1}</RowHead>
                  {columns.map(([n], c) => <Cell key={n}>{r[c]}{cellExtras[n + (i + 1)]}</Cell>)}
                </tr>
              ))}
            </tbody>
          </Sheet>
        </SheetArea>
        <VScroll>
          <ScrollButton $w={12} aria-label="向上滚动"><Icon w={7} h={4}><path d="M0 4h7L3.500 0z" fill="#777" /></Icon></ScrollButton>
          <VTrack><VThumb /></VTrack>
          <ScrollButton $w={12} aria-label="向下滚动"><Icon w={7} h={4}><path d="M0 0h7L3.500 4z" fill="#777" /></Icon></ScrollButton>
        </VScroll>
      </Body>
      <Footer>
        <NavArrows>
          <button aria-label="上一个工作表"><Icon w={5} h={7}><path d="M4 0v7L0 3.500z" fill="#bcbcbc" /></Icon></button>
          <button aria-label="下一个工作表"><Icon w={5} h={7}><path d="M1 0v7l4-3.500z" fill="#bcbcbc" /></Icon></button>
        </NavArrows>
        <TabSep $first />
        <SheetTab>成绩表</SheetTab>
        <SheetTab $active $bg="#ffffff" $fg={color.green} $pad={13}>员工信息</SheetTab>
        <SheetTab>田字格</SheetTab>
        <TabSep />
        <SheetTab $bg="#bdd7ee" $fg="#222222" $strong>XXX公司销售额</SheetTab>
        <TabSep />
        <SheetTab $bg="#f4b084" $fg="#222222" $strong $pad={10}>课程表</SheetTab>
        <TabSep />
        <SheetTab>Sheet5</SheetTab>
        <TabSep />
        <AddSheet aria-label="新工作表"><Icon w={17}><circle cx="8.500" cy="8.500" r="7.500" stroke="#777" /><path d="M8.500 4.500v8M4.500 8.500h8" stroke="#777" strokeWidth="1.400" /></Icon></AddSheet>
        <Grip $w={30}><Dots /></Grip>
        <HScroll>
          <ScrollButton aria-label="向左滚动"><Icon w={4} h={7}><path d="M4 0v7L0 3.500z" fill="#777" /></Icon></ScrollButton>
          <HThumb />
          <ScrollButton aria-label="向右滚动"><Icon w={4} h={7}><path d="M0 0v7l4-3.500z" fill="#666" /></Icon></ScrollButton>
        </HScroll>
      </Footer>
      <Watermark>
        <Icon w={44} h={42}>
          <path d="M42 3C24 0 2 14 3 28c1 8 12 8 20 1-8 2-13 1-13-4C10 17 24 7 42 3z" fill="#4d9bdc" />
          <path d="M14 25c3-8 18-14 24-8 6 9-9 22-30 23 15-4 24-13 21-18-3-3-9-1-15 3z" fill="#5cb85c" />
          <path d="M8 40c12-2 22-8 25-14 1 7-10 15-25 14z" fill="#c5d84e" />
        </Icon>
        <div>
          <MarkName>极光下载站</MarkName>
          <MarkUrl>www.xz7.com</MarkUrl>
        </div>
      </Watermark>
      <Pointer width="14" height="22" viewBox="0 0 14 22"><path d="M1 1v16l4-3.500 3 7 3-1.500-3-6.500h5.500z" fill="#fff" stroke="#222" /></Pointer>
    </Window>
  );
}
